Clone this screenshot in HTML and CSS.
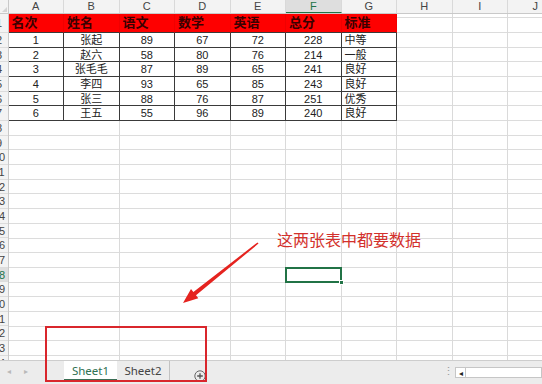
FILE: index.html
```html
<!DOCTYPE html>
<html lang="zh-CN">
  <head>
    <meta charset="UTF-8">
    <meta name="viewport" content="width=device-width, initial-scale=1.0">
    <title>成绩表</title>
    <link rel="stylesheet" href="styles.css">
  </head>
  <body>
    <div class="app">
      <div class="sheet">
        <div class="col-heads">
          <div class="corner"></div>
          <div class="col-head">A</div>
          <div class="col-head">B</div>
          <div class="col-head">C</div>
          <div class="col-head">D</div>
          <div class="col-head">E</div>
          <div class="col-head selected">F</div>
          <div class="col-head">G</div>
          <div class="col-head">H</div>
          <div class="col-head">I</div>
          <div class="col-head">J</div>
        </div>
        <div class="body">
          <div class="row-heads">
            <div class="row-head first"><span>1</span></div>
            <div class="row-head"><span>2</span></div>
            <div class="row-head"><span>3</span></div>
            <div class="row-head"><span>4</span></div>
            <div class="row-head"><span>5</span></div>
            <div class="row-head"><span>6</span></div>
            <div class="row-head"><span>7</span></div>
            <div class="row-head"><span>8</span></div>
            <div class="row-head"><span>9</span></div>
            <div class="row-head"><span>10</span></div>
            <div class="row-head"><span>11</span></div>
            <div class="row-head"><span>12</span></div>
            <div class="row-head"><span>13</span></div>
            <div class="row-head"><span>14</span></div>
            <div class="row-head"><span>15</span></div>
            <div class="row-head"><span>16</span></div>
            <div class="row-head"><span>17</span></div>
            <div class="row-head selected"><span>18</span></div>
            <div class="row-head"><span>19</span></div>
            <div class="row-head"><span>20</span></div>
            <div class="row-head"><span>21</span></div>
            <div class="row-head"><span>22</span></div>
            <div class="row-head"><span>23</span></div>
            <div class="row-head"><span>24</span></div>
          </div>
          <div class="cells">
            <div class="data">
              <div class="cell th">名次</div>
              <div class="cell th">姓名</div>
              <div class="cell th">语文</div>
              <div class="cell th">数学</div>
              <div class="cell th">英语</div>
              <div class="cell th">总分</div>
              <div class="cell th">标准</div>

              <div class="cell">1</div><div class="cell">张起</div><div class="cell">89</div><div class="cell">67</div><div class="cell">72</div><div class="cell">228</div><div class="cell left">中等</div>
              <div class="cell">2</div><div class="cell">赵六</div><div class="cell">58</div><div class="cell">80</div><div class="cell">76</div><div class="cell">214</div><div class="cell left">一般</div>
              <div class="cell">3</div><div class="cell">张毛毛</div><div class="cell">87</div><div class="cell">89</div><div class="cell">65</div><div class="cell">241</div><div class="cell left">良好</div>
              <div class="cell">4</div><div class="cell">李四</div><div class="cell">93</div><div class="cell">65</div><div class="cell">85</div><div class="cell">243</div><div class="cell left">良好</div>
              <div class="cell">5</div><div class="cell">张三</div><div class="cell">88</div><div class="cell">76</div><div class="cell">87</div><div class="cell">251</div><div class="cell left">优秀</div>
              <div class="cell">6</div><div class="cell">王五</div><div class="cell">55</div><div class="cell">96</div><div class="cell">89</div><div class="cell">240</div><div class="cell left">良好</div>
            </div>

            <div class="active-cell"></div>
            <div class="note">这两张表中都要数据</div>
            <svg class="arrow" width="84" height="70" viewBox="0 0 84 70">
              <polygon points="79.5,4.4 80.5,5.6 18,57.2 20.3,60.2 5,65 13,51.1 15.4,54.1" fill="#e5231f"/>
            </svg>
          </div>
        </div>
      </div>

      <div class="tabs">
        <div class="tab-nav"><span>◂</span><span>▸</span></div>
        <div class="tab active">Sheet1</div>
        <div class="tab">Sheet2</div>
        <div class="tab-add">
          <svg width="12" height="12" viewBox="0 0 12 12">
            <circle cx="6" cy="6" r="5.2" fill="none" stroke="#666" stroke-width="1"/>
            <path d="M6 3.2v5.6M3.2 6h5.6" stroke="#555" stroke-width="1.3"/>
          </svg>
        </div>
        <div class="tab-fill"></div>
        <div class="splitter">⋮</div>
        <div class="hscroll">
          <div class="hscroll-btn">◂</div>
          <div class="hscroll-track"></div>
        </div>
      </div>

      <div class="highlight-box"></div>
    </div>
  </body>
</html>
```

FILE: styles.css
```css
:root {
  font-family: "Liberation Sans", "Noto Sans CJK SC", sans-serif;
}

body {
  margin: 0;
}

.app {
  position: relative;
  width: 542px;
  height: 384px;
  overflow: hidden;
  background: #fff;
  display: flex;
  flex-direction: column;
}

.sheet {
  height: 360px;
  display: flex;
  flex-direction: column;
  flex: none;
}

/* column letters */
.col-heads {
  display: flex;
  height: 14px;
  flex: none;
  box-sizing: border-box;
  background: #f3f3f3;
  border-bottom: 1px solid #c9c9c9;
}
.corner {
  position: relative;
  width: 8.5px;
  flex: none;
  box-sizing: border-box;
  border-right: 1px solid #c9c9c9;
}
.corner::after {
  content: "";
  position: absolute;
  right: 1px;
  bottom: 1px;
  border-left: 5px solid transparent;
  border-bottom: 5px solid #d4d4d4;
}
.col-head {
  width: 55.5px;
  flex: none;
  box-sizing: border-box;
  border-right: 1px solid #d9d9d9;
  text-align: center;
  font-size: 11px;
  line-height: 13px;
  color: #444;
}
.col-head.selected {
  background: #dedede;
  color: #217346;
  border-bottom: 1px solid #217346;
}

/* rows */
.body {
  display: flex;
  flex: 1;
  min-height: 0;
  overflow: hidden;
}
.row-heads {
  width: 8.5px;
  flex: none;
  box-sizing: border-box;
  background: #f3f3f3;
  border-right: 1px solid #c9c9c9;
  overflow: hidden;
}
.row-head {
  height: 14.68px;
  box-sizing: border-box;
  border-bottom: 1px solid #dcdcdc;
  display: flex;
  justify-content: flex-end;
  font-size: 11px;
  line-height: 14px;
  color: #444;
  > span {
    width: 20px;
    flex: none;
    margin-right: -1.5px;
    text-align: center;
  }
}
.row-head.first {
  height: 19px;
  line-height: 18px;
}
.row-head.selected {
  background: #dedede;
  color: #217346;
}

.cells {
  position: relative;
  flex: 1;
  background-image:
    repeating-linear-gradient(to right, transparent 0 54.5px, #dadada 54.5px 55.5px),
    repeating-linear-gradient(to bottom, transparent -10.36px 3.32px, #dcdcdc 3.32px 4.32px);
}

.data {
  display: grid;
  grid-template-columns: repeat(7, 55.5px);
  grid-template-rows: 19px repeat(6, 14.68px);
  width: max-content;
  background: #fff;
}
.cell {
  box-sizing: border-box;
  border-right: 1px solid #3a3a3a;
  border-bottom: 1px solid #3a3a3a;
  padding: 0 3px;
  font-size: 11px;
  line-height: 14px;
  color: #222;
  text-align: center;
  white-space: nowrap;
}
.cell.left {
  text-align: left;
}
.cell.th {
  background: #fe0000;
  border-right-color: #f00000;
  color: #3a0000;
  font-weight: bold;
  font-size: 13px;
  line-height: 18px;
  text-align: left;
}

.active-cell {
  position: absolute;
  left: 276.5px;
  top: 252.6px;
  width: 57px;
  height: 16.5px;
  box-sizing: border-box;
  border: 2px solid #217346;
  &::after {
    content: "";
    position: absolute;
    right: -4px;
    bottom: -4px;
    width: 5px;
    height: 5px;
    background: #217346;
    border: 1px solid #fff;
    box-sizing: border-box;
  }
}

.note {
  position: absolute;
  left: 268.5px;
  top: 217px;
  font-family: "Noto Sans CJK SC", sans-serif;
  font-size: 16px;
  line-height: 1;
  color: #d3312c;
  white-space: nowrap;
}

.arrow {
  position: absolute;
  left: 169.5px;
  top: 224px;
}

/* sheet tabs */
.tabs {
  height: 24px;
  flex: none;
  display: flex;
  box-sizing: border-box;
  background: #ececec;
  border-top: 1px solid #cdcdcd;
  font-family: "Noto Sans", "Liberation Sans", sans-serif;
}
.tab-nav {
  width: 64px;
  flex: none;
  display: flex;
  gap: 13px;
  padding-left: 7px;
  box-sizing: border-box;
  font-size: 8px;
  line-height: 20px;
  color: #b9b9b9;
}
.tab {
  width: 53px;
  height: 20px;
  flex: none;
  box-sizing: border-box;
  border-right: 1px solid #c2c2c2;
  text-align: center;
  font-size: 11.5px;
  line-height: 19px;
  color: #444;
}
.tab.active {
  background: #fff;
  color: #2f7153;
  border-right: none;
  border-bottom: 2px solid #3b6e55;
}
.tab-add {
  flex: none;
  margin-left: 24px;
  padding-top: 4px;
}
.tab-fill {
  flex: 1;
}
.splitter {
  flex: none;
  width: 12px;
  font-size: 11px;
  line-height: 20px;
  color: #9a9a9a;
}
.hscroll {
  width: 87px;
  flex: none;
  display: flex;
  margin-top: 6px;
  height: 11px;
}
.hscroll-btn {
  width: 11px;
  box-sizing: border-box;
  background: #fff;
  border: 1px solid #c6c6c6;
  font-size: 8px;
  line-height: 9px;
  text-align: center;
  color: #222;
}
.hscroll-track {
  flex: 1;
  background: #fff;
  border: 1px solid #c6c6c6;
  border-left: none;
}

.highlight-box {
  position: absolute;
  left: 45px;
  top: 326px;
  width: 162px;
  height: 56px;
  box-sizing: border-box;
  border: 2px solid #d9262c;
}
```
